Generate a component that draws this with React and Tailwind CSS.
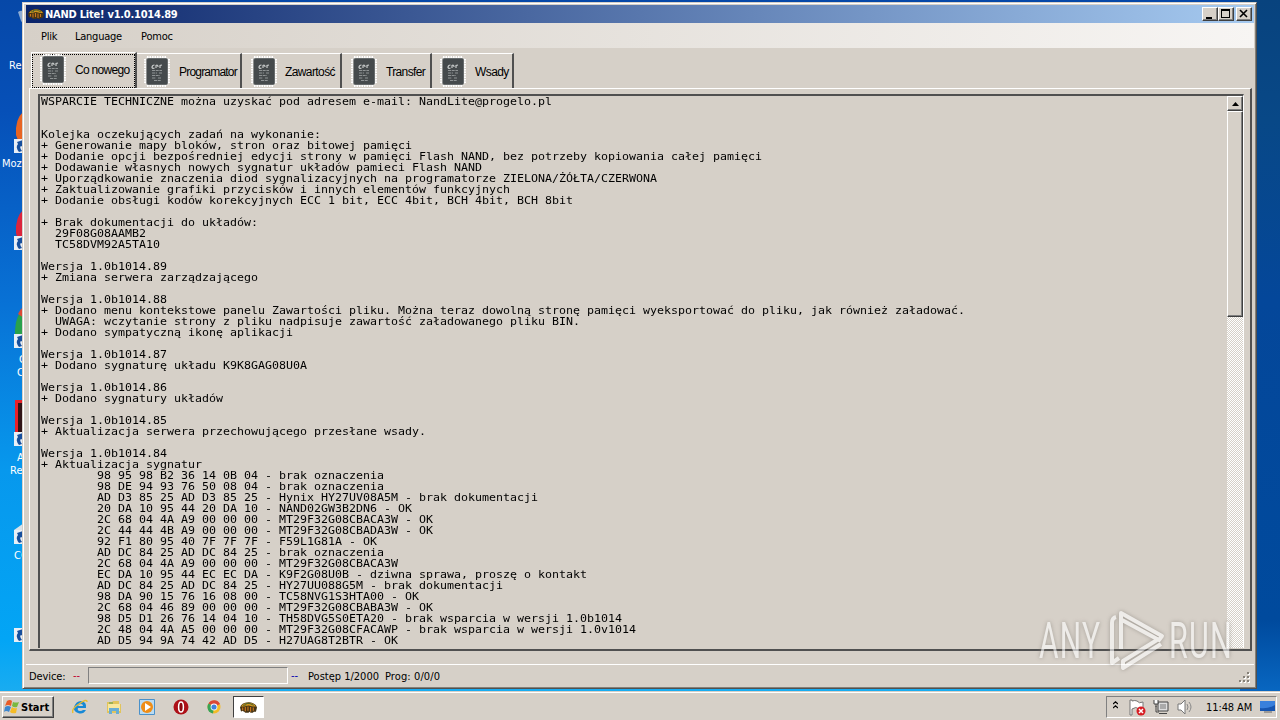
const news = `WSPARCIE TECHNICZNE można uzyskać pod adresem e-mail: NandLite@progelo.pl


Kolejka oczekujących zadań na wykonanie:
+ Generowanie mapy bloków, stron oraz bitowej pamięci
+ Dodanie opcji bezpośredniej edycji strony w pamięci Flash NAND, bez potrzeby kopiowania całej pamięci
+ Dodawanie własnych nowych sygnatur układów pamieci Flash NAND
+ Uporządkowanie znaczenia diod sygnalizacyjnych na programatorze ZIELONA/ŻÓŁTA/CZERWONA
+ Zaktualizowanie grafiki przycisków i innych elementów funkcyjnych
+ Dodanie obsługi kodów korekcyjnych ECC 1 bit, ECC 4bit, BCH 4bit, BCH 8bit

+ Brak dokumentacji do układów:
  29F08G08AAMB2
  TC58DVM92A5TA10

Wersja 1.0b1014.89
+ Zmiana serwera zarządzającego

Wersja 1.0b1014.88
+ Dodano menu kontekstowe panelu Zawartości pliku. Można teraz dowolną stronę pamięci wyeksportować do pliku, jak również załadować.
  UWAGA: wczytanie strony z pliku nadpisuje zawartość załadowanego pliku BIN.
+ Dodano sympatyczną ikonę aplikacji

Wersja 1.0b1014.87
+ Dodano sygnaturę układu K9K8GAG08U0A

Wersja 1.0b1014.86
+ Dodano sygnatury układów

Wersja 1.0b1014.85
+ Aktualizacja serwera przechowującego przesłane wsady.

Wersja 1.0b1014.84
+ Aktualizacja sygnatur
        98 95 98 B2 36 14 0B 04 - brak oznaczenia
        98 DE 94 93 76 50 08 04 - brak oznaczenia
        AD D3 85 25 AD D3 85 25 - Hynix HY27UV08A5M - brak dokumentacji
        20 DA 10 95 44 20 DA 10 - NAND02GW3B2DN6 - OK
        2C 68 04 4A A9 00 00 00 - MT29F32G08CBACA3W - OK
        2C 44 44 4B A9 00 00 00 - MT29F32G08CBADA3W - OK
        92 F1 80 95 40 7F 7F 7F - F59L1G81A - OK
        AD DC 84 25 AD DC 84 25 - brak oznaczenia
        2C 68 04 4A A9 00 00 00 - MT29F32G08CBACA3W
        EC DA 10 95 44 EC EC DA - K9F2G08U0B - dziwna sprawa, proszę o kontakt
        AD DC 84 25 AD DC 84 25 - HY27UU088G5M - brak dokumentacji
        98 DA 90 15 76 16 08 00 - TC58NVG1S3HTA00 - OK
        2C 68 04 46 89 00 00 00 - MT29F32G08CBABA3W - OK
        98 D5 D1 26 76 14 04 10 - TH58DVG5S0ETA20 - brak wsparcia w wersji 1.0b1014
        2C 48 04 4A A5 00 00 00 - MT29F32G08CFACAWP - brak wsparcia w wersji 1.0v1014
        AD D5 94 9A 74 42 AD D5 - H27UAG8T2BTR - OK`;

const tabs = [
    { label: 'Programator', width: 'w-[105px]', pad: 'pl-[7px]', gap: 'gap-[9px]', text: 'tracking-[-0.8px]' },
    { label: 'Zawartość', width: 'w-[100px]', pad: 'pl-[9px]', gap: 'gap-[8px]', text: 'tracking-[-0.6px]' },
    { label: 'Transfer', width: 'w-[90px]', pad: 'pl-[9px]', gap: 'gap-[9px]', text: 'tracking-[-0.65px]' },
    { label: 'Wsady', width: 'w-[82px]', pad: 'pl-[8px]', gap: 'gap-[9px]', text: 'tracking-[-0.6px]' },
];

const raised = 'border border-t-white border-l-white border-r-[#404040] border-b-[#404040] bg-[#d6d0c8] shadow-[inset_-1px_-1px_0_#808080]';

function BugIcon({ className }) {
    return (
        <svg viewBox="0 0 16 16" className={className}>
            <path d="M0 8Q1 3.5 8 3Q15 3.5 16 8L15 12H13L12 13H10L9 12L8 13H5L4 12L2 11L1 12Z" fill="#463414" />
            <path d="M1 7Q3 3.5 8 3.5Q13 3.5 15 7L12 7L8 6L4 7Z" fill="#d0951d" />
            <path d="M5 4.5L9 4L13 6M3 6L6 5.5" stroke="#55652b" fill="none" />
            <path d="M2.5 8V10.5M5 7.5V11.5M7.5 7V11M10 7.5V12M12.5 8V11" stroke="#c9761e" strokeWidth="1.1" />
        </svg>
    );
}

function ChipIcon() {
    return (
        <svg viewBox="0 0 26 31" className="h-[31px] w-[26px] shrink-0">
            <rect x="1" y="1" width="24" height="29" rx="3" fill="#e2dfda" />
            <path d="M3 1H23M3 30H23" stroke="#fff" strokeWidth="2" strokeDasharray="1.5 1" />
            <path d="M1 3V28M25 3V28" stroke="#fff" strokeWidth="2" strokeDasharray="1.5 1" />
            <rect x="2" y="2" width="22" height="27" rx="2" fill="#8d8f8e" />
            <rect x="3" y="2.5" width="20.5" height="26" rx="1.5" fill="#454a4c" />
            <path d="M10.5 9Q8 9 8 11.5Q8.5 13 10.5 12M12 12V9.5Q14 8.5 14 11M16 12V9.5L18 9" stroke="#c9cccc" strokeWidth="1.2" fill="none" />
            <path d="M8 14.5H18M8 17H13M15 17H18M8 19.5H16M8 22H12M14 22H17M10 24.5H17" stroke="#8f9394" strokeDasharray="3 .7" />
        </svg>
    );
}

function ShortcutArrow() {
    return (
        <svg viewBox="0 0 12 14" className="absolute left-0 bottom-0 h-[14px] w-3">
            <path d="M0 0H12V14H0Z" fill="#e9eff6" />
            <path d="M5 13Q1 8 4 5L3 3L9 1V8L7 7Q5 8 8 12Z" fill="#174f9d" />
        </svg>
    );
}

function DesktopIcon({ top, children }) {
    return (
        <div className="absolute left-[14px] h-[42px] w-[30px]" style={{ top }}>
            <svg viewBox="0 0 30 42" className="h-[42px] w-[30px] overflow-visible">{children}</svg>
            <ShortcutArrow />
        </div>
    );
}

function Desktop() {
    return (
        <div className="absolute inset-0 overflow-hidden bg-[linear-gradient(180deg,#0648a8_0px,#0650b8_110px,#0871d5_300px,#0798ed_470px,#03a5f5_640px,#26b0ee_720px)] text-[11px] leading-[13px] text-white">
            <div className="absolute right-0 top-0 h-full w-[40px] bg-[linear-gradient(180deg,#08437e_0px,#084887_120px,#04479a_300px,#004a9d_620px,#0866c0_690px)]" />
            <svg viewBox="0 0 10 20" className="absolute left-[18px] top-[9px] h-5 w-[10px]">
                <path d="M0 3Q4 0 8 4V18L3 12Z" fill="#8eacd3" />
            </svg>
            <DesktopIcon top={111}><path d="M2 24Q1 8 9 1V40Q5 33 2 24Z" fill="#e86523" /></DesktopIcon>
            <DesktopIcon top={208}><path d="M2 25Q1 9 10 1V38Q4 35 2 25Z" fill="#dc253c" /></DesktopIcon>
            <DesktopIcon top={306}>
                <path d="M1 24Q2 8 10 3V38H1Z" fill="#29a14b" />
                <path d="M4 8Q7 2 10 1V12Z" fill="#dd4935" />
            </DesktopIcon>
            <DesktopIcon top={404}>
                <path d="M1 -4H15V42H1Z" fill="#e72129" />
                <path d="M4 -1H15V31H4Z" fill="#301315" />
            </DesktopIcon>
            <DesktopIcon top={502}><path d="M0 28L10 21V42H0Z" fill="#d9e3ea" /></DesktopIcon>
            <DesktopIcon top={600} />
            <span className="absolute left-[9px] top-[59px]">Re</span>
            <span className="absolute left-[2px] top-[157px]">Moz</span>
            <span className="absolute left-[19px] top-[353px]">G</span>
            <span className="absolute left-[17px] top-[366px]">Ch</span>
            <span className="absolute left-[17px] top-[451px]">Ac</span>
            <span className="absolute left-[10px] top-[464px]">Re</span>
            <span className="absolute left-[14px] top-[549px]">CC</span>
        </div>
    );
}

function TitleBar() {
    return (
        <div className="flex h-[18px] items-center bg-[linear-gradient(90deg,#0a246a,#a6caf0)] pl-[2px] pr-[2px]">
            <BugIcon className="h-4 w-4" />
            <span className="ml-[1px] flex-1 pt-[2px] text-[11px] font-bold tracking-[-0.23px] text-white">NAND Lite! v1.0.1014.89</span>
            <button className={`h-[14px] w-4 ${raised}`}>
                <svg viewBox="0 0 14 12" className="h-3 w-[14px]"><path d="M3 9H9V11H3Z" /></svg>
            </button>
            <button className={`h-[14px] w-4 ${raised}`}>
                <svg viewBox="0 0 14 12" className="h-3 w-[14px]"><path d="M2 1H11V10H2ZM3 3V9H10V3Z" fillRule="evenodd" /></svg>
            </button>
            <button className={`ml-[2px] h-[14px] w-4 ${raised}`}>
                <svg viewBox="0 0 14 12" className="h-3 w-[14px]"><path d="M3 2L10 9M10 2L3 9" stroke="#000" strokeWidth="1.6" /></svg>
            </button>
        </div>
    );
}

function TabBar() {
    return (
        <div className="flex h-9 items-end pl-[5px]">
            <div className="flex h-9 w-[106px] items-center border-l border-t border-white border-r-2 border-r-[#505050]">
                <div className="flex h-[34px] w-full items-center gap-[9px] border border-dotted border-black pb-[2px] pl-[7px]">
                    <ChipIcon />
                    <span className="whitespace-nowrap text-[12px] tracking-[-0.7px] font-['Liberation_Sans',sans-serif]">Co nowego</span>
                </div>
            </div>
            {tabs.map(tab => (
                <div key={tab.label} className={`flex h-[35px] items-center border-t border-white border-r-2 border-r-[#505050] ${tab.width} ${tab.pad} ${tab.gap}`}>
                    <ChipIcon />
                    <span className={`whitespace-nowrap pt-px text-[12px] font-['Liberation_Sans',sans-serif] ${tab.text}`}>{tab.label}</span>
                </div>
            ))}
        </div>
    );
}

function ScrollBar() {
    return (
        <div className="flex w-4 shrink-0 flex-col bg-[repeating-conic-gradient(#fff_0_25%,#d6d0c8_0_50%)] bg-[size:2px_2px]">
            <button className={`flex h-[15px] w-4 shrink-0 items-center justify-center ${raised}`}>
                <svg viewBox="0 0 7 4" className="h-1 w-[7px]"><path d="M0 4L3.5 0L7 4Z" /></svg>
            </button>
            <div className={`h-[206px] ${raised}`} />
        </div>
    );
}

function NewsPanel() {
    return (
        <div className="ml-[3px] mr-[2px] flex h-[563px] border-l border-t border-white border-b-2 border-b-[#505050] border-r-2 border-r-[#505050] pl-[8px] pr-[6px] pt-[5px]">
            <div className="flex h-[554px] w-full overflow-hidden border-l-2 border-t-2 border-[#505050] border-r border-r-white">
                <div className="min-w-0 flex-1 overflow-hidden">
                    <pre className="w-[1000px] origin-top-left scale-x-[1.1627] pl-[0.9px] text-[10px] leading-[11px] font-['DejaVu_Sans_Mono',monospace]">{news}</pre>
                </div>
                <ScrollBar />
            </div>
        </div>
    );
}

function StatusBar() {
    return (
        <div className="mt-[13px] flex h-[23px] items-center border-t border-white pl-[3px] pr-[2px] text-[11px]">
            <span className="w-[44px] pt-[2px] tracking-[-0.1px]">Device:</span>
            <span className="w-[15px] pt-px text-[#c00030]">--</span>
            <div className="-mt-px h-[17px] w-[200px] border border-b-white border-l-[#808080] border-r-white border-t-[#808080]" />
            <span className="ml-[3px] w-[17px] pt-px text-[#0000b0]">--</span>
            <span className="w-[77px] whitespace-nowrap pt-[2px] tracking-[0px]">Postęp 1/2000</span>
            <span className="flex-1 pt-[2px] tracking-[0.1px]">Prog: 0/0/0</span>
            <svg viewBox="0 0 12 12" className="mt-[3px] mr-px h-3 w-3">
                <path d="M9 1h2v2H9zM5 5h2v2H5zM9 5h2v2H9zM1 9h2v2H1zM5 9h2v2H5zM9 9h2v2H9z" fill="#fff" />
                <path d="M8 0h2v2H8zM4 4h2v2H4zM8 4h2v2H8zM0 8h2v2H0zM4 8h2v2H4zM8 8h2v2H8z" fill="#858078" />
            </svg>
        </div>
    );
}

function AppWindow() {
    return (
        <div className="absolute left-[22px] top-[2px] h-[687px] w-[1235px] border border-[#d6d0c8] border-b-[#505050] border-r-[#505050] bg-[#d6d0c8] shadow-[inset_1px_1px_0_#fff,inset_-1px_-1px_0_#858078]">
            <div className="pl-[3px] pr-[2px] pt-[2px]">
                <TitleBar />
                <div className="flex h-[25px] items-center bg-[linear-gradient(90deg,#d6d0c8,#f7f5f3)] pl-[15px] pt-[3px] text-[11px]">
                    <span className="w-[34px] tracking-[-0.2px]">Plik</span>
                    <span className="w-[66px] tracking-[-0.25px]">Language</span>
                    <span className="tracking-[-0.2px]">Pomoc</span>
                </div>
                <div className="h-[4px]" />
                <TabBar />
                <NewsPanel />
                <StatusBar />
            </div>
        </div>
    );
}

function Watermark() {
    return (
        <div className="absolute left-[1039px] top-[609px] flex h-[64px] w-[194px] items-center text-white opacity-60 drop-shadow-[0_0_2px_#807b74]">
            <span className="w-[70px] origin-left scale-x-[0.6] text-[50px] leading-[64px] font-['Roboto',sans-serif] font-normal tracking-[2px]">ANY</span>
            <svg viewBox="0 0 56 64" className="h-16 w-14 shrink-0" fill="none" stroke="currentColor" strokeWidth="4" strokeLinejoin="round">
                <path d="M7 8Q3 9 3 14V54L10 49" />
                <path d="M12 40V4L53 27L50 31L13 11" />
                <path d="M52 35L14 59V52L48 31" />
            </svg>
            <span className="ml-[4px] w-[64px] origin-left scale-x-[0.61] text-[50px] leading-[64px] font-['Roboto',sans-serif] font-normal tracking-[2px]">RUN</span>
        </div>
    );
}

function WindowsFlag() {
    return (
        <svg viewBox="0 0 16 16" className="h-4 w-4">
            <path d="M3 2Q6 0 8 2L7 7Q4 5 1 7Z" fill="#e95b27" />
            <path d="M9 3Q12 4 15 3L13 8Q10 9 8 7Z" fill="#79b83f" />
            <path d="M1 8Q4 6 7 8L5 13Q2 11 0 13Z" fill="#3d86ce" />
            <path d="M8 8Q10 10 13 9L12 14Q8 15 6 13Z" fill="#f5bc27" />
        </svg>
    );
}

function QuickLaunch() {
    return (
        <div className="ml-[18px] flex items-center gap-[17.5px]">
            <svg viewBox="0 0 16 16" className="h-4 w-4">
                <path d="M14 9H6Q5 12 8 12Q10 12 11 11H14Q11 16 6 14Q1 12 2 8Q4 2 9 2Q15 3 14 9ZM6 7H11Q11 5 9 5Q7 5 6 7" fill="#1789d6" fillRule="evenodd" />
                <path d="M1 14Q-1 10 7 5Q15-1 15 3" fill="none" stroke="#e9bd2e" strokeWidth="1.4" />
            </svg>
            <svg viewBox="0 0 16 16" className="h-4 w-4">
                <path d="M1 3H6L7 2H13V5H15V14H1Z" fill="#e1c45c" />
                <path d="M2 5H14V12H2Z" fill="#f8e79d" />
                <path d="M3 9H13V15H10V12H6V15H3Z" fill="#68add4" />
                <path d="M3 4H7" stroke="#54984d" />
            </svg>
            <svg viewBox="0 0 16 16" className="h-4 w-4">
                <path d="M.5.5H15.5V15.5H.5Z" fill="#badbf2" stroke="#4a91ca" />
                <circle cx="8" cy="8" r="6" fill="#ef8d17" />
                <path d="M6 4L12 8L6 12Z" fill="#fff" />
            </svg>
            <svg viewBox="0 0 16 16" className="h-4 w-4">
                <circle cx="8" cy="8" r="7.5" fill="#ad1017" />
                <ellipse cx="8" cy="8" rx="2.4" ry="5" fill="#8b070d" stroke="#fff" strokeWidth="1.5" />
            </svg>
            <svg viewBox="0 0 16 16" className="h-4 w-4">
                <circle cx="8" cy="8" r="6.5" fill="#f3bc28" />
                <path d="M8 8L2.5 4.5A6.5 6.5 0 0 1 14 5Z" fill="#da4736" />
                <path d="M8 8L2.5 4.5A6.5 6.5 0 0 0 7 14.5Z" fill="#38a356" />
                <circle cx="8" cy="8" r="3.4" fill="#fff" />
                <circle cx="8" cy="8" r="2.6" fill="#4182dc" />
            </svg>
        </div>
    );
}

function Tray() {
    return (
        <div className="mr-[3px] ml-auto flex h-[22px] w-[171px] items-center border border-b-white border-l-[#808080] border-r-white border-t-[#808080] pl-[6px] text-[11px]">
            <svg viewBox="0 0 5 8" className="-mt-1 h-2 w-[5px] shrink-0" fill="none" stroke="#000" strokeWidth="1.2"><path d="M0 3L2.5 .8L5 3M0 7L2.5 4.8L5 7" /></svg>
            <svg viewBox="0 0 18 17" className="ml-[11px] h-[17px] w-[18px] shrink-0">
                <path d="M1 1V16H3V10Q7 7 10 10H14V3Q10 5 8 2Q6 1 3 2V1Z" fill="#fff" stroke="#777" />
                <circle cx="12" cy="12" r="4.5" fill="#d71d24" />
                <path d="M10 10L14 14M14 10L10 14" stroke="#fff" strokeWidth="1.5" />
            </svg>
            <svg viewBox="0 0 16 16" className="ml-[6px] h-4 w-4 shrink-0">
                <path d="M5 3H15V12H5Z" fill="#dedede" stroke="#444" />
                <path d="M7 5H13V10H7Z" fill="#aaa" />
                <path d="M6 14.5H14M3 7V13H6" stroke="#444" fill="none" />
                <path d="M1 1V5H5V1M3 5V8" fill="#fff" stroke="#444" />
            </svg>
            <svg viewBox="0 0 17 16" className="ml-[8px] h-4 w-[17px] shrink-0" fill="none">
                <path d="M1 5H4L8 1V15L4 11H1Z" fill="#fff" stroke="#777" />
                <path d="M10 5Q12 8 10 11M12 3Q16 8 12 13" stroke="#888" />
            </svg>
            <span className="ml-[12px] w-[54px] whitespace-nowrap pt-[2px] tracking-[-0.1px]">11:48 AM</span>
            <svg viewBox="0 0 15 14" className="h-[14px] w-[15px] shrink-0">
                <path d="M0 1H15V11H0Z" fill="#1655b0" />
                <path d="M0 1H15V5Q8 9 0 8Z" fill="#3980dc" />
                <path d="M4 12H12" stroke="#666" />
            </svg>
        </div>
    );
}

function Taskbar() {
    return (
        <div className="absolute bottom-0 left-0 flex h-[29px] w-full items-center border-t border-[#d6d0c8] bg-[#d6d0c8] pl-[2px] pt-[2px] shadow-[inset_0_1px_0_#fff]">
            <button className={`flex h-[22px] w-[52px] items-center gap-[1px] pl-[1px] ${raised}`}>
                <WindowsFlag />
                <span className="pt-[2px] text-[11px] font-bold tracking-[0px]">Start</span>
            </button>
            <QuickLaunch />
            <div className="ml-[11px] flex h-[22px] w-[31px] items-center justify-center border border-b-white border-l-[#404040] border-r-white border-t-[#404040] bg-white">
                <BugIcon className="h-[17px] w-[17px]" />
            </div>
            <Tray />
        </div>
    );
}

export default function App() {
    return (
        <main className="relative h-[720px] w-[1280px] overflow-hidden text-black font-['DejaVu_Sans_Condensed','DejaVu_Sans',sans-serif]">
            <Desktop />
            <AppWindow />
            <Taskbar />
            <Watermark />
        </main>
    );
}
